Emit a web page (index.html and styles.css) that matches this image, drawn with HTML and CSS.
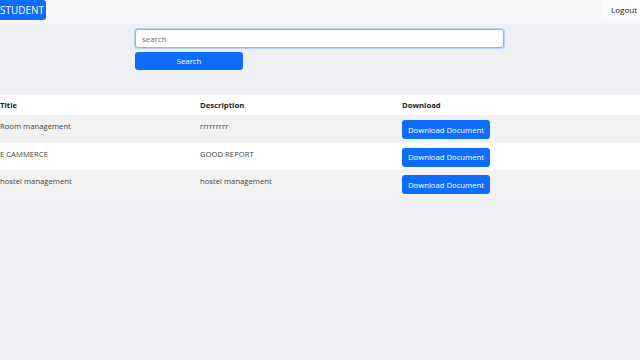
FILE: index.html
```html
<!DOCTYPE html>
<html lang="en">
<head>
  <meta charset="UTF-8">
  <meta name="viewport" content="width=device-width, initial-scale=1.0">
  <title>Student Documents</title>
  <link rel="stylesheet" href="styles.css">
</head>
<body>
  <nav class="navbar">
    <a class="brand" href="#">STUDENT</a>
    <a class="logout" href="#">Logout</a>
  </nav>

  <div class="search">
    <input type="text" class="search-input" placeholder="search" autofocus>
    <button class="btn btn-primary search-btn">Search</button>
  </div>

  <table class="docs">
    <thead>
      <tr>
        <th class="col-title">Title</th>
        <th class="col-desc">Description</th>
        <th>Download</th>
      </tr>
    </thead>
    <tbody>
      <tr class="odd">
        <td>Room management</td>
        <td>rrrrrrrrr</td>
        <td><button class="btn btn-primary">Download Document</button></td>
      </tr>
      <tr>
        <td>E CAMMERCE</td>
        <td>GOOD REPORT</td>
        <td><button class="btn btn-primary">Download Document</button></td>
      </tr>
      <tr class="odd">
        <td>hostel management</td>
        <td>hostel management</td>
        <td><button class="btn btn-primary">Download Document</button></td>
      </tr>
    </tbody>
  </table>
</body>
</html>
```

FILE: styles.css
```css
body {
  margin: 0;
  font-family: "Open Sans", "Noto Sans", Arial, sans-serif;
  font-size: 7.7px;
  color: #212529;
  background-color: #eff0f4;
}

.navbar {
  display: flex;
  justify-content: space-between;
  align-items: flex-start;
  height: 24px;
  background-color: #f7f7f9;
}

.brand {
  display: block;
  background-color: #0d6efd;
  color: #fff;
  text-decoration: none;
  font-size: 10px;
  line-height: 20px;
  height: 20px;
  width: 46px;
  box-sizing: border-box;
  border-radius: 0 3px 3px 0;
}

.logout {
  display: block;
  background-color: #fbfbfc;
  color: #212529;
  text-decoration: none;
  font-size: 8px;
  line-height: 20px;
  height: 20px;
  padding: 0 3px 0 9px;
}

.search {
  display: flex;
  flex-direction: column;
  align-items: flex-start;
  padding: 5px 0 0 135px;
  height: 66px;
}

.search-input {
  width: 369px;
  height: 19px;
  box-sizing: border-box;
  padding: 0 6px;
  font-family: inherit;
  font-size: 8px;
  color: #212529;
  background-color: #fff;
  border: 1px solid #86b7fe;
  border-radius: 3px;
  box-shadow: 0 0 0 1px rgba(13, 110, 253, 0.25);
  outline: none;
}

.search-input::placeholder {
  color: #6c757d;
}

.btn {
  font-family: inherit;
  font-size: 7.7px;
  border: none;
  border-radius: 3px;
  cursor: pointer;
}

.btn-primary {
  background-color: #0d6efd;
  color: #fff;
}

.search-btn {
  margin-top: 4px;
  width: 108px;
  height: 18px;
}

.docs {
  width: 100%;
  border-collapse: collapse;
  background-color: #fff;
}

.docs th {
  text-align: left;
  font-weight: 700;
  height: 20px;
  padding: 0;
  vertical-align: middle;
}

.docs td {
  padding: 5px 0 3.7px;
  height: 19px;
  vertical-align: top;
  color: #444;
}

.docs td:nth-child(-n+2) {
  padding-top: 6px;
  height: 18px;
}

.col-title {
  width: 200px;
}

.col-desc {
  width: 202px;
}

.docs tr.odd td {
  background-color: #f2f2f2;
}

.docs .btn {
  width: 88px;
  height: 19px;
  padding: 0;
}
```
